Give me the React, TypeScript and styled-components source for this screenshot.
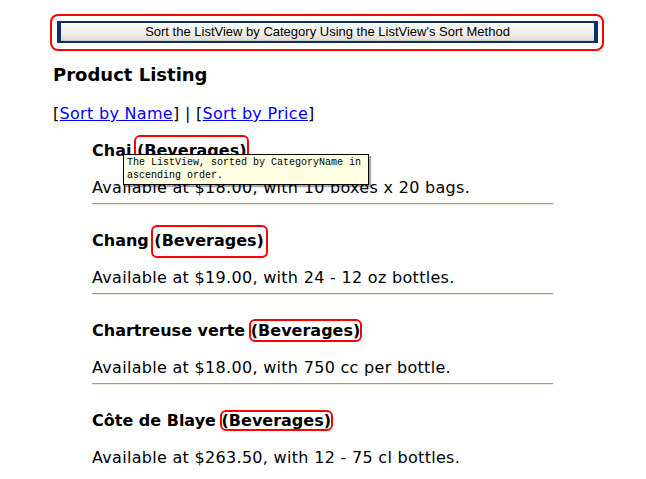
import React from 'react'
import styled, { createGlobalStyle } from 'styled-components'

const Global = createGlobalStyle`
  html, body { margin: 0; padding: 0; background: #fff; }
  body { font-family: "DejaVu Sans", Verdana, sans-serif; color: #000; }
`

type Product = {
  name: string
  price: string
  qty: string
  mark: { l: number; r: number; t: number; b: number }
}

const products: Product[] = [
  { name: 'Chai', price: '$18.00', qty: '10 boxes x 20 bags', mark: { l: -3, r: -3, t: -6, b: -4 } },
  { name: 'Chang', price: '$19.00', qty: '24 - 12 oz bottles', mark: { l: -3, r: -4, t: -6, b: -8 } },
  { name: 'Chartreuse verte', price: '$18.00', qty: '750 cc per bottle', mark: { l: -2, r: -2, t: -2, b: -2 } },
  { name: 'Côte de Blaye', price: '$263.50', qty: '12 - 75 cl bottles', mark: { l: -2, r: -2, t: -1, b: -1 } },
]

export default function App() {
  return <Page>
    <Global />
    <ButtonFrame>
      <SortButton>Sort the ListView by Category Using the ListView's Sort Method</SortButton>
    </ButtonFrame>

    <Heading>Product Listing</Heading>

    <SortLinks>
      [<A href="#">Sort by Name</A>] | [<A href="#">Sort by Price</A>]
    </SortLinks>

    <List>
      {products.map((p, i) => (
        <Item key={p.name}>
          <Title>
            {p.name} <Category $m={p.mark}>(Beverages)</Category>
          </Title>
          <Desc>Available at {p.price}, with {p.qty}.</Desc>
          {i < products.length - 1 && <Rule />}
          {i === 0 && (
            <Tip>The ListView, sorted by CategoryName in<br />ascending order.</Tip>
          )}
        </Item>
      ))}
    </List>
  </Page>
}

const Page = styled.div`
  padding: 14px 0 0 50px;
  width: 554px;
`
const ButtonFrame = styled.div`
  border: 2px solid #f00;
  border-radius: 8px;
  padding: 5px 4px 0 5px;
  box-sizing: border-box;
  height: 37px;
`
const SortButton = styled.button`
  display: block;
  width: 100%;
  height: 22px;
  margin: 0;
  padding: 0 0 1px;
  border-style: solid;
  border-color: #0b2f66;
  border-width: 2px 4px;
  background: linear-gradient(#fbfbf8, #efeee8 60%, #dedcd2);
  box-shadow: inset 0 1px 0 #fff, inset 0 -1px 0 #cfcdc2;
  font-family: "Liberation Sans", Arial, sans-serif;
  font-size: 13px;
  color: #000;
  line-height: 16px;
`
const Heading = styled.h3`
  margin: 13px 0 0 3px;
  font-size: 18px;
  line-height: 22px;
  font-weight: bold;
`
const SortLinks = styled.div`
  margin: 18px 0 0 3px;
  font-size: 16px;
  line-height: 20px;
  letter-spacing: 0.3px;
`
const A = styled.a`
  color: #00f;
  text-decoration: underline;
`
const List = styled.div`
  margin: 17px 0 0 42px;
  width: 461px;
`
const Item = styled.div`
  position: relative;
  margin-bottom: 26px;
`
const Title = styled.div`
  font-size: 16px;
  line-height: 20px;
  font-weight: bold;
  white-space: nowrap;
`
const Category = styled.span<{ $m: Product['mark'] }>`
  position: relative;
  &::after {
    content: '';
    position: absolute;
    left: ${p => p.$m.l}px;
    right: ${p => p.$m.r}px;
    top: ${p => p.$m.t}px;
    bottom: ${p => p.$m.b}px;
    border: 2px solid #f00;
    border-radius: 6px;
  }
`
const Desc = styled.div`
  margin-top: 17px;
  font-size: 16px;
  line-height: 20px;
  letter-spacing: 0.3px;
  color: #000;
`
const Rule = styled.div`
  margin-top: 5px;
  height: 1px;
  background: #a09c90;
  border-bottom: 1px solid #eeecdf;
`
const Tip = styled.div`
  position: absolute;
  left: 31px;
  top: 13px;
  width: 241px;
  padding: 1px 0 2px 3px;
  background: #ffffe1;
  border: 1px solid #000;
  box-shadow: 2px 2px 1px rgba(0, 0, 0, 0.35);
  font-family: "Liberation Mono", "Courier New", monospace;
  font-size: 10px;
  line-height: 13px;
  color: #000;
`
